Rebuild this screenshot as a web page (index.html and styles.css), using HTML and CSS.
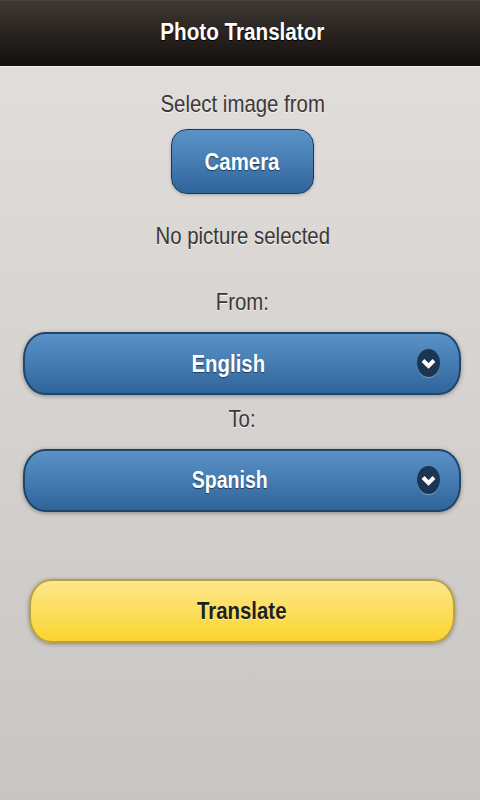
FILE: index.html
```html
<!DOCTYPE html>
<html lang="en">
<head>
    <meta charset="UTF-8">
    <meta name="viewport" content="width=device-width, initial-scale=1.0">
    <title>Photo Translator</title>
    <link rel="stylesheet" href="styles.css">
</head>
<body>
    <header class="header">
        <h1>Photo Translator</h1>
    </header>
    <main class="content">
        <p class="label label-source">Select image from</p>
        <button class="btn-camera"><span class="btn-text">Camera</span></button>
        <p class="label label-status">No picture selected</p>
        <p class="label label-from">From:</p>
        <div class="select">
            <span class="select-text">English</span>
            <span class="select-icon">
                <svg width="23" height="28" viewBox="0 0 23 28">
                    <path d="M6 11.5 L11.5 17 L17 11.5" fill="none" stroke="#fff" stroke-width="4"/>
                </svg>
            </span>
        </div>
        <p class="label label-to">To:</p>
        <div class="select">
            <span class="select-text select-text-small">Spanish</span>
            <span class="select-icon">
                <svg width="23" height="28" viewBox="0 0 23 28">
                    <path d="M6 11.5 L11.5 17 L17 11.5" fill="none" stroke="#fff" stroke-width="4"/>
                </svg>
            </span>
        </div>
        <button class="btn-translate"><span class="btn-text">Translate</span></button>
    </main>
</body>
</html>
```

FILE: styles.css
```css
html, body {
    height: 100%;
}

body {
    margin: 0;
    font-family: "Liberation Sans", Arial, sans-serif;
    background: linear-gradient(#e0ddda 66px, #c9c5c3 100%);
    color: #3c3836;
}

.header {
    height: 66px;
    box-sizing: border-box;
    border-top: 1px solid #4a4440;
    border-bottom: 1px solid #191412;
    background: linear-gradient(#3f3833, #14100e);
    box-shadow: 0 1px 1px rgba(255, 255, 255, 0.5);
    display: flex;
    justify-content: center;
    align-items: center;
    padding-left: 5px;
}

.header h1 {
    margin: 0 0 3px;
    font-size: 24px;
    font-weight: bold;
    color: #fff;
    text-shadow: 0 1px 1px #000;
    transform: scaleX(0.86);
}

.content {
    display: flex;
    flex-direction: column;
    align-items: center;
    padding-left: 5px;
}

/* the source text is squeezed sideways, so scale it instead of spacing it */
.label {
    margin: 0;
    font-size: 24px;
    line-height: 28px;
    text-shadow: 0 1px 0 #f4f2f0;
    transform: scaleX(0.85);
}

.label-source {
    margin-top: 24px;
}

.label-status {
    margin-top: 28px;
}

.label-from {
    margin-top: 38px;
    margin-bottom: 16px;
}

.label-to {
    margin: 10px 0 16px;
}

.btn-text {
    display: inline-block;
    transform: scaleX(0.85);
}

.btn-camera {
    margin-top: 11px;
    width: 143px;
    height: 65px;
    border: 1px solid #173a5c;
    border-radius: 16px;
    background: linear-gradient(#5b93c9, #30659b);
    box-shadow: 0 1px 3px rgba(0, 0, 0, 0.25);
    color: #fff;
    font-family: inherit;
    font-size: 24px;
    font-weight: bold;
    text-shadow: 0 1px 1px #1c3b5c;
}

.select {
    position: relative;
    width: 438px;
    height: 63px;
    margin-left: -2px;
    box-sizing: border-box;
    border: 2px solid #1f4568;
    border-radius: 22px / 26px;
    background: linear-gradient(#5a92c8, #30659b);
    box-shadow: 0 1px 4px rgba(0, 0, 0, 0.35);
    display: flex;
    justify-content: center;
    align-items: center;
    padding-right: 27px;
}

.select-text {
    color: #fff;
    font-size: 24px;
    font-weight: bold;
    text-shadow: 0 1px 1px #1c3b5c;
    transform: scaleX(0.85);
}

.select-text-small {
    margin-left: 4px;
    font-size: 23px;
}

.select-icon {
    position: absolute;
    right: 19px;
    top: 15px;
    width: 23px;
    height: 28px;
    border-radius: 50%;
    background: #1c3553;
    box-shadow: 0 1px 0 rgba(255, 255, 255, 0.3);
    display: flex;
}

.btn-translate {
    margin-top: 67px;
    margin-left: -2px;
    width: 426px;
    height: 64px;
    border: 2px solid #b9a045;
    border-radius: 22px / 26px;
    background: linear-gradient(#fde68c, #fbd52e);
    box-shadow: 0 1px 4px rgba(0, 0, 0, 0.35);
    color: #231f1c;
    font-family: inherit;
    font-size: 24px;
    font-weight: bold;
    text-shadow: 0 1px 0 #fdf0b0;
}
```
